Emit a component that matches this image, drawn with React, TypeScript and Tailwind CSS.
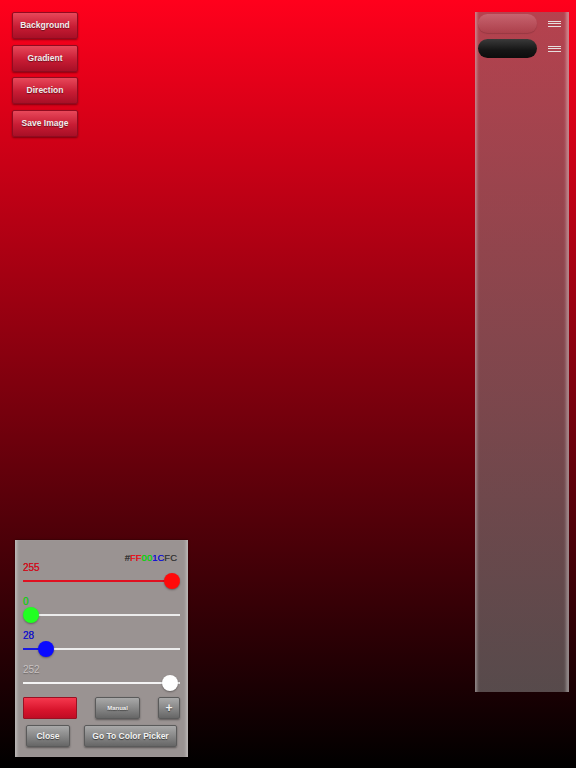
import React from "react";

const font = { fontFamily: '"Liberation Sans", Arial, sans-serif' };

function RedButton({ label }: { label: string }) {
  return (
    <div className="flex h-[27px] w-[66px] items-center justify-center rounded-[2px] border border-[#900c20] bg-[linear-gradient(to_bottom,#e8485a,#c81c34_55%,#a80f26)] text-[8.5px] font-bold text-[#f2eeee] shadow-[0_1px_2px_rgba(0,0,0,0.4)] [text-shadow:0_1px_1px_rgba(0,0,0,0.45)]">
      {label}
    </div>
  );
}

function GrayButton({ label, w, size }: { label: string; w: string; size: string }) {
  return (
    <div
      className={`flex h-[22px] items-center justify-center rounded-[2px] border border-[#5a5a5a] bg-[linear-gradient(to_bottom,#a9a9a9,#858585_55%,#666)] font-bold text-[#f2f2f2] shadow-[0_1px_2px_rgba(0,0,0,0.4)] [text-shadow:0_1px_1px_rgba(0,0,0,0.55)] ${w} ${size}`}
    >
      {label}
    </div>
  );
}

function Slider({
  label,
  value,
  labelClass,
  fill,
  thumb,
}: {
  label: string;
  value: number;
  labelClass: string;
  fill: string;
  thumb: string;
}) {
  const trackW = 157;
  const thumbLeft = ((trackW - 16) * value) / 255;
  return (
    <div className="flex flex-col">
      <div className={`h-[10px] text-[10px] leading-[10px] ${labelClass}`}>{label}</div>
      <div className="relative h-[16px] w-[157px]">
        <div className="absolute left-0 right-0 top-[7px] h-[2px] bg-[#ececec]" />
        <div
          className="absolute left-0 top-[7px] h-[2px]"
          style={{ width: thumbLeft + 8, background: fill }}
        />
        <div
          className="absolute top-0 h-[16px] w-[16px] rounded-full shadow-[0_1px_2px_rgba(0,0,0,0.35)]"
          style={{ left: thumbLeft, background: thumb }}
        />
      </div>
    </div>
  );
}

function Hamburger() {
  return (
    <div className="flex w-[13px] flex-col gap-[1.5px]">
      <div className="h-[1px] bg-[#e6dede]" />
      <div className="h-[1px] bg-[#e6dede]" />
      <div className="h-[1px] bg-[#e6dede]" />
    </div>
  );
}

export default function App() {
  return (
    <div
      className="relative h-[768px] w-[576px] overflow-hidden bg-[linear-gradient(to_bottom,#ff001c,#000000)]"
      style={font}
    >
      <div className="flex h-full justify-between">
        {/* left column */}
        <div className="flex flex-col justify-between pb-[11px] pl-[12px] pt-[12px]">
          <div className="flex flex-col gap-[5.5px]">
            <RedButton label="Background" />
            <RedButton label="Gradient" />
            <RedButton label="Direction" />
            <RedButton label="Save Image" />
          </div>

          {/* color panel */}
          <div className="ml-[3px] flex w-[173px] flex-col px-[8px] pb-[10px] pt-[13px] bg-[#9a9392] shadow-[inset_4px_0_3px_-2px_rgba(255,255,255,0.35),inset_-4px_0_3px_-2px_rgba(255,255,255,0.35),0_0_2px_rgba(0,0,0,0.5)]">
            <div className="flex h-[10px] justify-end pr-[3px] text-[9.5px] leading-[10px] [text-shadow:0_0_0.4px_currentColor]">
              <span className="text-[#333]">#</span>
              <span className="text-[#e8101a]">FF</span>
              <span className="text-[#12d012]">00</span>
              <span className="text-[#1414d4]">1C</span>
              <span className="text-[#3a3a3a]">FC</span>
            </div>
            <div className="flex flex-col gap-[8px]">
              <Slider label="255" value={255} labelClass="text-[#d0101e] [text-shadow:0_0_0.4px_currentColor]" fill="#e01020" thumb="#ff0a0a" />
              <Slider label="0" value={0} labelClass="text-[#1ec81e] [text-shadow:0_0_0.4px_currentColor]" fill="#1ee01e" thumb="#22ff22" />
              <Slider label="28" value={28} labelClass="text-[#1818c8] [text-shadow:0_0_0.4px_currentColor]" fill="#1a1ae0" thumb="#0a0aff" />
              <Slider
                label="252"
                value={252}
                labelClass="text-[#c8c2c2] [text-shadow:0_1px_1px_rgba(0,0,0,0.3)]"
                fill="#f4f4f4"
                thumb="#ffffff"
              />
            </div>
            <div className="mt-[6px] flex items-center justify-between">
              <div className="h-[22px] w-[54px] rounded-[1px] border border-[#9a1022] bg-[linear-gradient(to_bottom,#f5384e,#d8142c_60%,#c00c24)]" />
              <GrayButton label="Manual" w="w-[45px]" size="text-[6px]" />
              <GrayButton label="+" w="w-[22px]" size="text-[12px]" />
            </div>
            <div className="mt-[6px] flex items-center justify-between px-[3px]">
              <GrayButton label="Close" w="w-[44px]" size="text-[8.5px]" />
              <GrayButton label="Go To Color Picker" w="w-[93px]" size="text-[8.5px]" />
            </div>
          </div>
        </div>

        {/* right panel */}
        <div className="mr-[7px] mt-[12px] flex h-[680px] w-[94px] flex-col gap-[6px] pl-[3px] pt-[2px] bg-[linear-gradient(to_bottom,rgba(125,120,120,0.55),rgba(125,120,120,0.62))] shadow-[inset_5px_0_3px_-3px_rgba(255,255,255,0.35),inset_-6px_0_3px_-3px_rgba(255,255,255,0.35)]">
          <div className="flex items-center gap-[11px]">
            <div className="h-[19px] w-[59px] rounded-full bg-[linear-gradient(to_bottom,rgba(220,140,150,0.45),rgba(160,60,70,0.35))] shadow-[0_1px_1px_rgba(0,0,0,0.15)]" />
            <Hamburger />
          </div>
          <div className="flex items-center gap-[11px]">
            <div className="h-[19px] w-[59px] rounded-full bg-[linear-gradient(to_bottom,#3a3a3a,#151515_60%,#0c0c0c)]" />
            <Hamburger />
          </div>
        </div>
      </div>
    </div>
  );
}
